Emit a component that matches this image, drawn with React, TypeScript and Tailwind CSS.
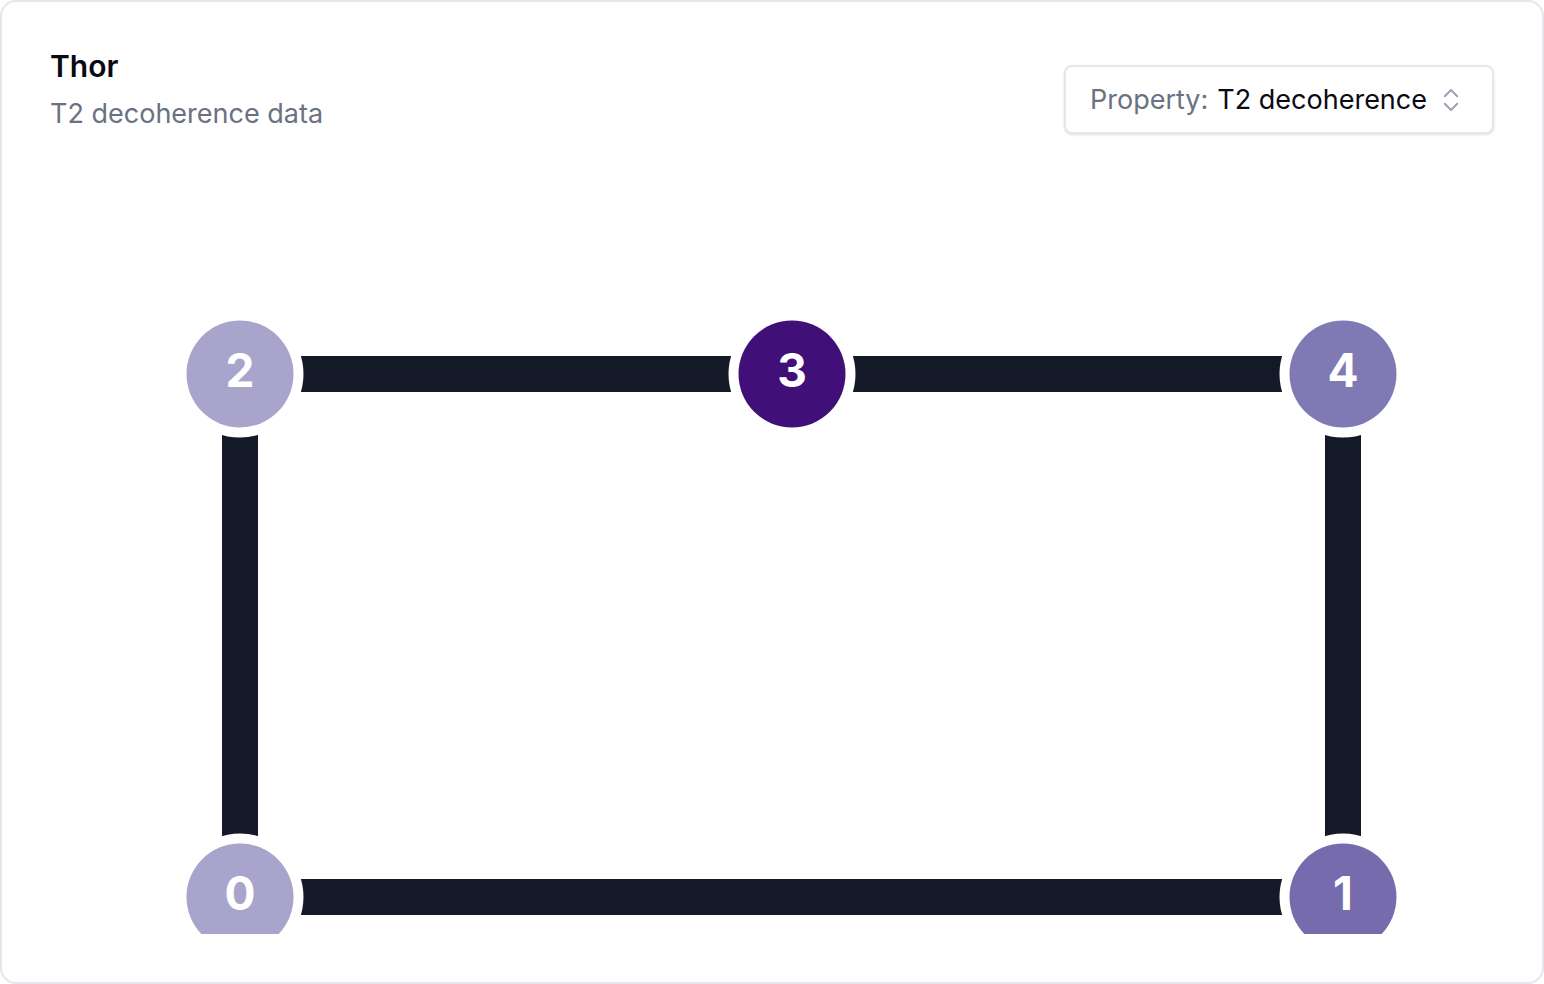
import { ChevronsUpDown } from "lucide-react";

interface QubitNode {
  id: number;
  x: number;
  y: number;
  color: string;
}

const nodes: QubitNode[] = [
  { id: 0, x: 190, y: 763, color: "#a8a4cb" },
  { id: 1, x: 1293, y: 763, color: "#766bad" },
  { id: 2, x: 190, y: 240, color: "#a8a4cb" },
  { id: 3, x: 742, y: 240, color: "#410f78" },
  { id: 4, x: 1293, y: 240, color: "#7f7ab3" },
];

const edges: [number, number][] = [
  [2, 3],
  [3, 4],
  [2, 0],
  [4, 1],
  [0, 1],
];

const byId = (id: number) => nodes.find((n) => n.id === id)!;

const CouplingMap = () => (
  <svg width={1444} height={800} viewBox="0 0 1444 800" className="block">
    {edges.map(([a, b]) => {
      const from = byId(a);
      const to = byId(b);
      return (
        <line
          key={`${a}-${b}`}
          x1={from.x}
          y1={from.y}
          x2={to.x}
          y2={to.y}
          stroke="#131927"
          strokeWidth={36}
        />
      );
    })}
    {nodes.map((n) => (
      <g key={n.id}>
        <circle cx={n.x} cy={n.y} r={63.5} fill="#ffffff" />
        <circle cx={n.x} cy={n.y} r={53.5} fill={n.color} />
        <text
          x={n.x}
          y={n.y + 13}
          textAnchor="middle"
          fill="#ffffff"
          fontSize={46}
          fontWeight={700}
          fontFamily="Inter, 'Noto Sans', sans-serif"
        >
          {n.id}
        </text>
      </g>
    ))}
  </svg>
);

const App = () => {
  return (
    <div className="w-[1544px] h-[984px] bg-white font-['Inter','Noto_Sans',sans-serif]">
      <div className="h-full rounded-2xl border-2 border-gray-200 bg-white p-12 flex flex-col">
        <div className="flex items-start justify-between">
          <div>
            <h1 className="text-[30px] leading-[32px] font-semibold text-[#0a0a14]">Thor</h1>
            <p className="mt-3 text-[27px] leading-[40px] text-gray-500">T2 decoherence data</p>
          </div>
          <button className="mt-[15px] h-[69px] flex items-center rounded-lg border-2 border-gray-200 bg-white pl-6 pr-[26px] shadow-sm">
            <span className="text-[27px] leading-none text-gray-500">Property:</span>
            <span className="ml-[9px] text-[27px] leading-none text-[#0a0a14]">T2 decoherence</span>
            <ChevronsUpDown className="ml-[9px] h-[30px] w-[30px] text-gray-400" strokeWidth={1.5} />
          </button>
        </div>
        <div className="flex-1 min-h-0 overflow-hidden">
          <CouplingMap />
        </div>
      </div>
    </div>
  );
};

export default App;
